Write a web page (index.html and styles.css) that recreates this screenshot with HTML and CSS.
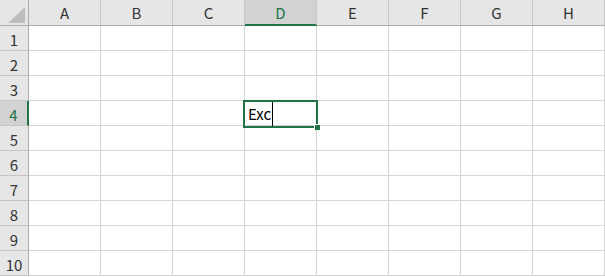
FILE: index.html
```html
<!DOCTYPE html>
<html lang="ja">
<head>
    <meta charset="UTF-8">
    <title>Sheet1</title>
    <link rel="stylesheet" href="styles.css">
</head>
<body>
    <div class="sheet">
        <div class="corner">
            <svg width="17" height="16" viewBox="0 0 17 16"><polygon points="17,0 17,16 0,16" fill="#bdbdbd"/></svg>
        </div>
        <div class="col-head">A</div>
        <div class="col-head">B</div>
        <div class="col-head">C</div>
        <div class="col-head active">D</div>
        <div class="col-head">E</div>
        <div class="col-head">F</div>
        <div class="col-head">G</div>
        <div class="col-head">H</div>

        <div class="row-head">1</div>
        <div class="cell"></div><div class="cell"></div><div class="cell"></div><div class="cell"></div>
        <div class="cell"></div><div class="cell"></div><div class="cell"></div><div class="cell"></div>

        <div class="row-head">2</div>
        <div class="cell"></div><div class="cell"></div><div class="cell"></div><div class="cell"></div>
        <div class="cell"></div><div class="cell"></div><div class="cell"></div><div class="cell"></div>

        <div class="row-head">3</div>
        <div class="cell"></div><div class="cell"></div><div class="cell"></div><div class="cell"></div>
        <div class="cell"></div><div class="cell"></div><div class="cell"></div><div class="cell"></div>

        <div class="row-head active">4</div>
        <div class="cell"></div><div class="cell"></div><div class="cell"></div>
        <div class="cell active">
            <span class="cell-text">Exc</span><span class="caret"></span>
            <div class="selection"></div>
            <div class="fill-handle"></div>
        </div>
        <div class="cell"></div><div class="cell"></div><div class="cell"></div><div class="cell"></div>

        <div class="row-head">5</div>
        <div class="cell"></div><div class="cell"></div><div class="cell"></div><div class="cell"></div>
        <div class="cell"></div><div class="cell"></div><div class="cell"></div><div class="cell"></div>

        <div class="row-head">6</div>
        <div class="cell"></div><div class="cell"></div><div class="cell"></div><div class="cell"></div>
        <div class="cell"></div><div class="cell"></div><div class="cell"></div><div class="cell"></div>

        <div class="row-head">7</div>
        <div class="cell"></div><div class="cell"></div><div class="cell"></div><div class="cell"></div>
        <div class="cell"></div><div class="cell"></div><div class="cell"></div><div class="cell"></div>

        <div class="row-head">8</div>
        <div class="cell"></div><div class="cell"></div><div class="cell"></div><div class="cell"></div>
        <div class="cell"></div><div class="cell"></div><div class="cell"></div><div class="cell"></div>

        <div class="row-head">9</div>
        <div class="cell"></div><div class="cell"></div><div class="cell"></div><div class="cell"></div>
        <div class="cell"></div><div class="cell"></div><div class="cell"></div><div class="cell"></div>

        <div class="row-head">10</div>
        <div class="cell"></div><div class="cell"></div><div class="cell"></div><div class="cell"></div>
        <div class="cell"></div><div class="cell"></div><div class="cell"></div><div class="cell"></div>
    </div>
</body>
</html>
```

FILE: styles.css
```css
body {
    margin: 0;
    padding: 0;
    background: #ffffff;
    font-family: "Noto Sans CJK JP", "Noto Sans", sans-serif;
    font-size: 15px;
    color: #000;
    overflow: hidden;
}

.sheet {
    display: grid;
    grid-template-columns: 29px repeat(8, 72px);
    grid-template-rows: 26px repeat(10, 25px);
}

.sheet > div {
    box-sizing: border-box;
    border-right: 1px solid #d4d4d4;
    border-bottom: 1px solid #d4d4d4;
}

.corner {
    background: #e6e6e6;
    display: flex;
    justify-content: flex-end;
    align-items: flex-end;
    padding: 0 3px 2px 0;
    border-right-color: #ababab !important;
    border-bottom-color: #ababab !important;
}

.corner svg {
    display: block;
}

.col-head {
    background: #e6e6e6;
    color: #333;
    display: flex;
    align-items: center;
    justify-content: center;
    border-right-color: #c6c6c6 !important;
    border-bottom-color: #ababab !important;
}

.col-head.active {
    background: #d2d2d2;
    color: #217346;
    border-bottom: 2px solid #217346 !important;
}

.row-head {
    background: #e6e6e6;
    color: #333;
    display: flex;
    align-items: center;
    justify-content: center;
    padding-top: 2px;
    border-right-color: #ababab !important;
    border-bottom-color: #c6c6c6 !important;
}

.row-head.active {
    background: #d2d2d2;
    color: #217346;
    border-right: 2px solid #217346 !important;
}

.cell {
    background: #fff;
}

.cell.active {
    position: relative;
    display: flex;
    align-items: stretch;
    padding-left: 3px;
}

.cell-text {
    align-self: center;
    padding-top: 1px;
}

.caret {
    width: 1px;
    background: #000;
    margin: -1px 0 -2px 1px;
}

.selection {
    position: absolute;
    left: -2px;
    top: -1px;
    width: 75px;
    height: 28px;
    box-sizing: border-box;
    border: 2px solid #217346;
}

.fill-handle {
    position: absolute;
    left: 69px;
    top: 23px;
    width: 5px;
    height: 5px;
    background: #217346;
    border-left: 1px solid #fff;
    border-top: 1px solid #fff;
}
```
